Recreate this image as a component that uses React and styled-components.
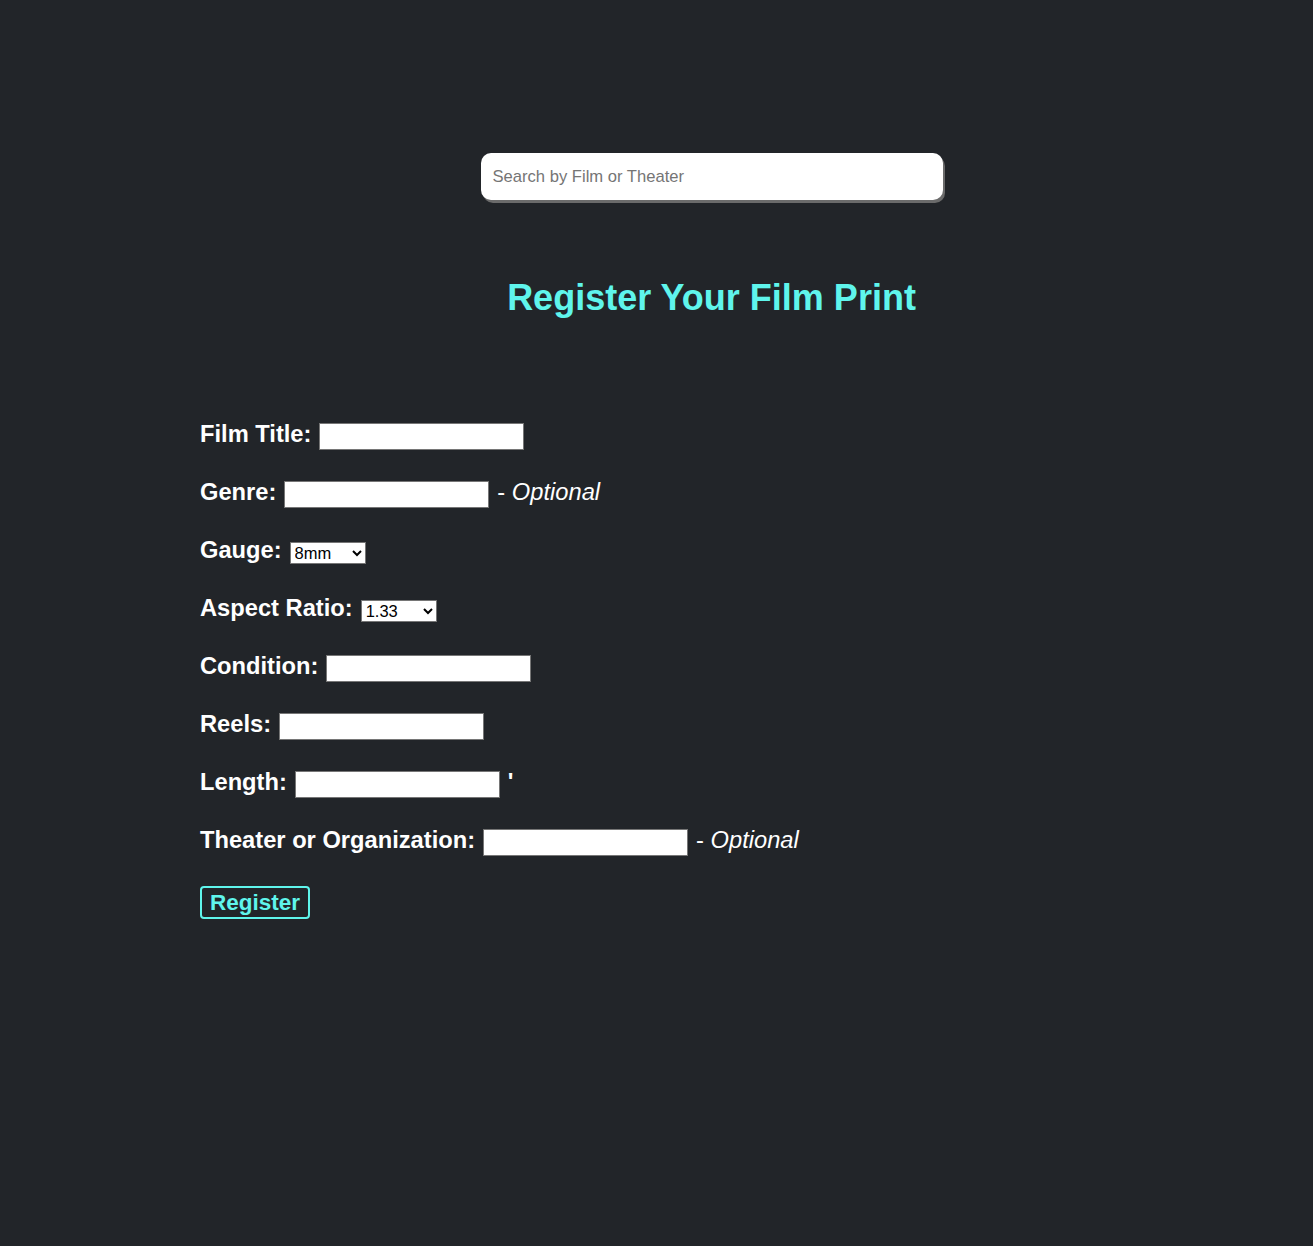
import React, { useState } from 'react';
import styled, { createGlobalStyle } from 'styled-components';

const GlobalStyle = createGlobalStyle`
  html, body {
    margin: 0;
    padding: 0;
    background-color: #222529;
    font-family: "Liberation Sans", Arial, sans-serif;
  }
`;

function App() {
  const [search, setSearch] = useState('');

  return (
    <Page>
      <GlobalStyle />
      <Main>
        <SearchBar
          type="text"
          value={search}
          onChange={(event) => setSearch(event.target.value)}
          placeholder="Search by Film or Theater"
        />
        <Heading>Register Your Film Print</Heading>
        <RegisterForm onSubmit={(event) => event.preventDefault()}>
          <Row>
            <Label>Film Title:</Label>
            <TextInput type="text" />
          </Row>
          <Row>
            <Label>Genre:</Label>
            <TextInput type="text" />
            <Note>- <em>Optional</em></Note>
          </Row>
          <Row>
            <Label>Gauge:</Label>
            <Select defaultValue="8mm">
              <option>8mm</option>
              <option>16mm</option>
              <option>35mm</option>
              <option>70mm</option>
            </Select>
          </Row>
          <Row>
            <Label>Aspect Ratio:</Label>
            <Select defaultValue="1.33">
              <option>1.33</option>
              <option>1.66</option>
              <option>1.85</option>
              <option>2.39</option>
            </Select>
          </Row>
          <Row>
            <Label>Condition:</Label>
            <TextInput type="text" />
          </Row>
          <Row>
            <Label>Reels:</Label>
            <TextInput type="text" />
          </Row>
          <Row>
            <Label>Length:</Label>
            <TextInput type="text" />
            <Unit>'</Unit>
          </Row>
          <Row>
            <Label>Theater or Organization:</Label>
            <TextInput type="text" />
            <Note>- <em>Optional</em></Note>
          </Row>
          <RegisterButton type="submit">Register</RegisterButton>
        </RegisterForm>
      </Main>
    </Page>
  );
}

export default App;

const Page = styled.div`
  min-height: 1246px;
  background-color: #222529;
`;

const Main = styled.main`
  margin-left: 110px;
  padding-top: 153px;
  display: flex;
  flex-direction: column;
  align-items: center;
`;

const SearchBar = styled.input`
  box-sizing: border-box;
  width: 462px;
  height: 47px;
  padding: 0 12px;
  border: none;
  border-radius: 10px;
  background: #fff;
  box-shadow: 2px 3px 0 #6b6b6b;
  font-family: "Liberation Sans", Arial, sans-serif;
  font-size: 16.6px;
  color: #333;

  &::placeholder {
    color: #757575;
  }

  &:focus {
    outline: none;
  }
`;

const Heading = styled.h1`
  margin: 77px 0 0;
  font-size: 36px;
  font-weight: bold;
  color: #5ff5ec;
`;

const RegisterForm = styled.form`
  align-self: stretch;
  margin-top: 102px;
  padding-left: 90px;
  display: flex;
  flex-direction: column;
  align-items: flex-start;
  gap: 31px;
`;

const Row = styled.div`
  display: flex;
  align-items: center;
  height: 27px;
  gap: 8px;
  color: #fff;
`;

const Label = styled.label`
  font-size: 23.7px;
  font-weight: bold;
  color: #fff;
`;

const TextInput = styled.input`
  box-sizing: border-box;
  width: 205px;
  height: 27px;
  margin-top: 4px;
  border: 1px solid #767676;
  background: #fff;
  padding: 2px 4px;

  &:focus {
    outline: none;
  }
`;

const Select = styled.select`
  box-sizing: border-box;
  width: 76px;
  height: 22px;
  margin-top: 4px;
  border: 1px solid #767676;
  border-radius: 0;
  background: #fff;
  font-family: "Liberation Sans", Arial, sans-serif;
  font-size: 16.5px;
  color: #000;
`;

const Note = styled.span`
  font-size: 23.7px;
  color: #fff;
`;

const Unit = styled.span`
  font-size: 23.7px;
  font-weight: bold;
  color: #fff;
`;

const RegisterButton = styled.button`
  height: 33px;
  margin-top: 1px;
  padding: 0 8px;
  border: 2px solid #5ff5ec;
  border-radius: 4px;
  background: transparent;
  color: #5ff5ec;
  font-family: "Liberation Sans", Arial, sans-serif;
  font-size: 22.5px;
  font-weight: bold;
  cursor: pointer;
`;
